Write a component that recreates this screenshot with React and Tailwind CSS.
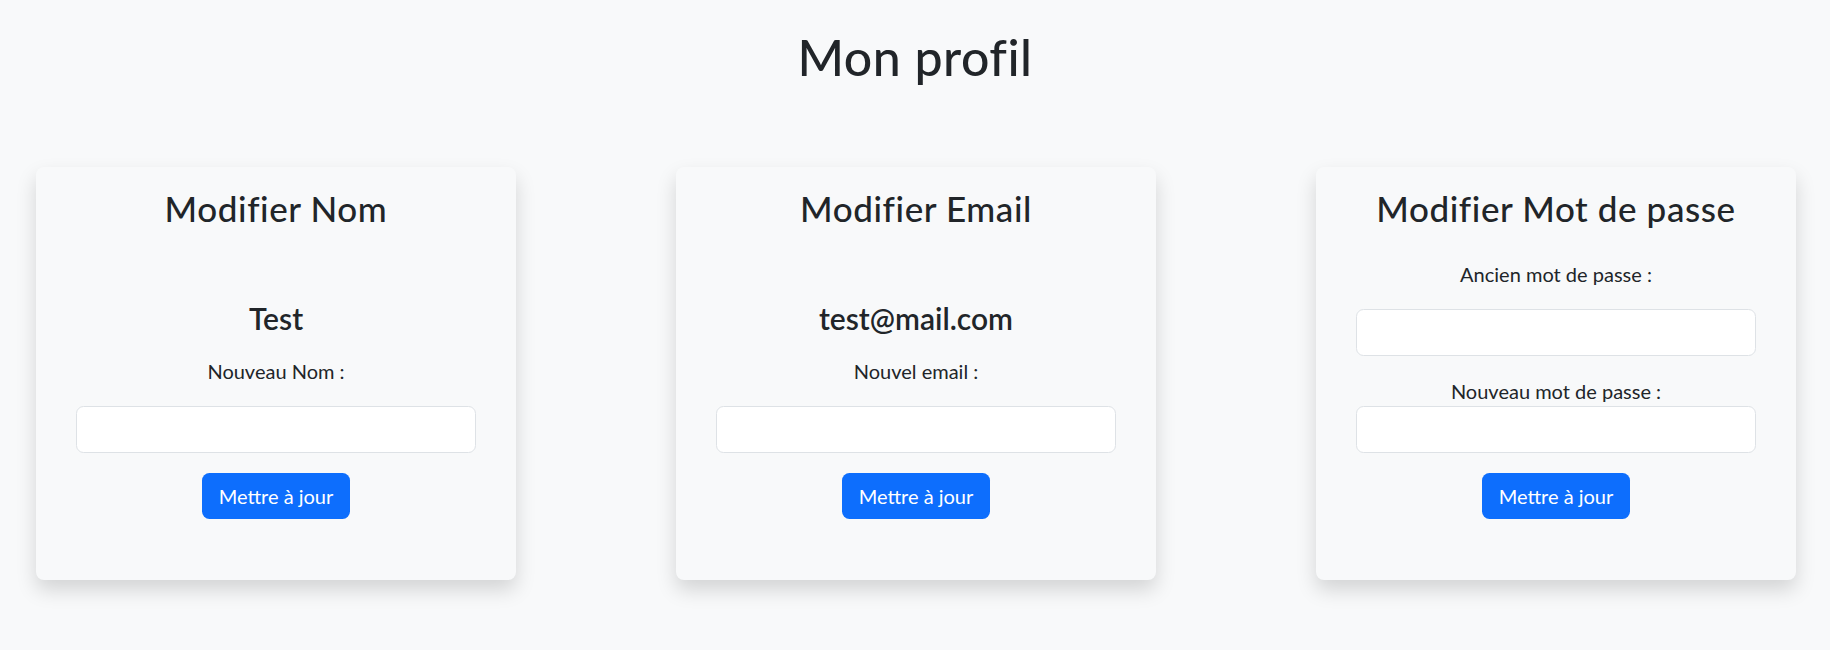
import React from "react";

const font = { fontFamily: "Lato, 'Noto Sans', sans-serif" };

function Field({ label, labelGap = "mb-[20px]", top = "mt-[20px]" }) {
  return (
    <div className={`flex flex-col ${top}`}>
      <label className={`block text-center text-[20px] leading-[30px] text-[#212529] ${labelGap}`}>{label}</label>
      <input
        type="text"
        className="mx-[40px] h-[47px] rounded-[7.5px] border border-[#dee2e6] bg-white px-[15px] text-[20px] outline-none"
      />
    </div>
  );
}

function Button() {
  return (
    <div className="mt-[20px] flex justify-center">
      <button className="h-[46px] w-[148px] rounded-[7.5px] bg-[#0d6efd] text-[20px] leading-[30px] text-white">
        Mettre à jour
      </button>
    </div>
  );
}

function Card({ children, title }) {
  return (
    <div className="w-[480px] rounded-[8px] bg-[#f8f9fa] pt-[20px] pb-[61px] shadow-[0_10px_20px_rgba(0,0,0,0.15)]">
      <h3 className="text-center text-[35px] leading-[42px] font-medium tracking-[0.6px] text-[#212529]">{title}</h3>
      {children}
    </div>
  );
}

export default function App() {
  return (
    <div className="min-h-[650px] w-full bg-[#f8f9fa] text-[#212529]" style={font}>
      <h1 className="pt-[27px] text-center text-[50px] leading-[60px] font-medium tracking-[0.5px] text-[#212529]">Mon profil</h1>
      <div className="mt-[80px] flex items-start gap-[160px] pl-[36px]">
        <Card title="Modifier Nom">
          <h4 className="mt-[71px] text-center text-[30px] leading-[36px] font-semibold">Test</h4>
          <Field label="Nouveau Nom :" />
          <Button />
        </Card>
        <Card title="Modifier Email">
          <h4 className="mt-[71px] text-center text-[30px] leading-[36px] font-semibold">test@mail.com</h4>
          <Field label="Nouvel email :" />
          <Button />
        </Card>
        <Card title="Modifier Mot de passe">
          <Field label="Ancien mot de passe :" top="mt-[30px]" />
          <Field label="Nouveau mot de passe :" labelGap="mb-0" />
          <Button />
        </Card>
      </div>
    </div>
  );
}
